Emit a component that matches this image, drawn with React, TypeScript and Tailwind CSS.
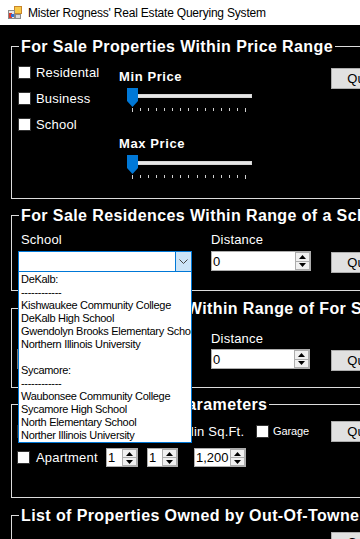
import React from 'react';

const LABEL = 'text-[13px] leading-[15px] text-white tracking-[0.2px] whitespace-nowrap';

function AppIcon() {
    return (
        <svg width="14" height="14" viewBox="0 0 14 14" className="block">
            <rect x="6.5" y="0.5" width="7" height="7" fill="#f7c948" stroke="#c9862a" />
            <rect x="0.5" y="4.5" width="6" height="8" fill="#e7e7e7" stroke="#8a8a8a" />
            <rect x="1" y="7" width="3" height="5" fill="#d83b2e" />
            <rect x="3" y="8" width="3" height="3" fill="#2f6fd6" />
            <rect x="7.5" y="8.5" width="5" height="4" fill="#d9d9d9" stroke="#8a8a8a" />
        </svg>
    );
}

function Check() {
    return <span className="block w-[13px] h-[13px] shrink-0 bg-white border border-[#333333]" />;
}

function Slider() {
    const ticks = Array.from({ length: 15 }, (_, i) => 6.5 + Math.round(i * 8.07));
    return (
        <svg width="130" height="26" className="block ml-[7px]">
            <rect x="10.5" y="6.5" width="115" height="3" fill="#e7e7e7" stroke="#d6d6d6" />
            {ticks.map((x, i) => (
                <line key={i} x1={x} x2={x} y1="20" y2={i === 0 || i === 14 ? 24 : 23} stroke="#d0d0d0" />
            ))}
            <path d="M1 0H12V13L6.5 19L1 13Z" fill="#0078d7" />
        </svg>
    );
}

function Arrow({ up }: { up?: boolean }) {
    return (
        <svg width="7" height="4" viewBox="0 0 7 4" className="block">
            <path d={up ? 'M0 4L3.5 0L7 4Z' : 'M0 0L3.5 4L7 0Z'} fill="#000" />
        </svg>
    );
}

function Spin({ value, className }: { value: string; className: string }) {
    return (
        <div className={`flex bg-white border border-[#adadad] ${className}`}>
            <span className="flex-1 self-center pl-[1px] text-[13px] leading-[15px] text-black">{value}</span>
            <div className="w-[15px] flex flex-col">
                <span className="flex-1 flex items-center justify-center bg-[#f0f0f0] border border-[#adadad]">
                    <Arrow up />
                </span>
                <span className="flex-1 flex items-center justify-center bg-[#f0f0f0] border border-t-0 border-[#adadad]">
                    <Arrow />
                </span>
            </div>
        </div>
    );
}

function QueryButton({ className = '' }: { className?: string }) {
    return (
        <button className={`w-[68px] h-[21px] shrink-0 bg-[#e1e1e1] border border-[#adadad] text-[13px] text-black flex items-center justify-center ${className}`}>
            Query
        </button>
    );
}

const schools = [
    'DeKalb:',
    '------------',
    'Kishwaukee Community College',
    'DeKalb High School',
    'Gwendolyn Brooks Elementary School',
    'Northern Illinois University',
    '',
    'Sycamore:',
    '------------',
    'Waubonsee Community College',
    'Sycamore High School',
    'North Elementary School',
    'Norther Illinois University',
];

function SchoolCombo() {
    return (
        <div className="relative w-[174px] h-[21px] flex bg-white border border-[#0078d7]">
            <div className="flex-1" />
            <div className="w-[16px] flex items-center justify-center bg-[#cce4f7] border-l border-[#0078d7]">
                <svg width="9" height="5" viewBox="0 0 9 5" className="block">
                    <polyline points="0.5,0.5 4.5,4.5 8.5,0.5" fill="none" stroke="#444" />
                </svg>
            </div>

            {/* open dropdown list */}
            <div className="absolute left-[-1px] top-full z-10 w-[174px] h-[172px] bg-white border border-[#0078d7] pt-[1px] pl-[2px] overflow-hidden">
                {schools.map((s, i) => (
                    <div key={i} className="h-[13px] text-[11px] leading-[13px] tracking-[-0.3px] text-black whitespace-nowrap">
                        {s}
                    </div>
                ))}
            </div>
        </div>
    );
}

function Group({ title, className, children }: { title: string; className: string; children: React.ReactNode }) {
    return (
        <fieldset className={`w-[600px] border border-[#dcdcdc] ${className}`}>
            <legend className="ml-[7px] px-[2px] h-[20px] text-[16px] leading-[22px] font-bold tracking-[0.4px] text-white whitespace-nowrap">
                {title}
            </legend>
            {children}
        </fieldset>
    );
}

export default function App() {
    return (
        <div className="w-[360px] h-[539px] overflow-hidden bg-black font-['Liberation_Sans',Arial,sans-serif]">
            {/* Title bar */}
            <div className="h-[25px] bg-white flex items-center pl-[8px] gap-[6px]">
                <AppIcon />
                <span className="text-[12px] tracking-[-0.2px] text-black">Mister Rogness' Real Estate Querying System</span>
            </div>

            <div className="pl-[11px]">
                {/* Price range */}
                <Group title="For Sale Properties Within Price Range" className="mt-[11px]">
                    <div className="h-[142px] flex">
                        <div className="w-[107px] pl-[6px] pt-[10px] flex flex-col gap-[13px]">
                            {['Residental', 'Business', 'School'].map(l => (
                                <div key={l} className="h-[13px] flex items-center gap-[5px]">
                                    <Check />
                                    <span className={LABEL}>{l}</span>
                                </div>
                            ))}
                        </div>
                        <div className="w-[212px] flex flex-col">
                            <span className="mt-[13px] text-[13px] leading-[15px] font-bold tracking-[0.6px] text-white">Min Price</span>
                            <div className="mt-[4px]"><Slider /></div>
                            <span className="mt-[22px] text-[13px] leading-[15px] font-bold tracking-[0.6px] text-white">Max Price</span>
                            <div className="mt-[4px]"><Slider /></div>
                        </div>
                        <QueryButton className="mt-[12px]" />
                    </div>
                </Group>

                {/* Near a school */}
                <Group title="For Sale Residences Within Range of a School" className="mt-[6px]">
                    <div className="h-[65px] flex">
                        <div className="w-[180px] pl-[6px] flex flex-col">
                            <span className={`mt-[7px] ml-[3px] ${LABEL}`}>School</span>
                            <div className="mt-[4px]"><SchoolCombo /></div>
                        </div>
                        <div className="ml-[19px] w-[100px] flex flex-col">
                            <span className={`mt-[7px] ${LABEL}`}>Distance</span>
                            <Spin value="0" className="mt-[4px] w-[100px] h-[20px]" />
                        </div>
                        <QueryButton className="ml-[20px] mt-[27px]" />
                    </div>
                </Group>

                {/* Near a business */}
                <Group title="For Sale Residential Within Range of For Sale Business" className="mt-[7px]">
                    <div className="h-[69px] flex">
                        <div className="w-[180px] pl-[5px] flex flex-col">
                            <span className={`mt-[13px] ml-[4px] ${LABEL}`}>Business</span>
                            <div className="mt-[3px] w-[175px] h-[20px] bg-white border border-[#7a7a7a]" />
                        </div>
                        <div className="ml-[19px] w-[100px] flex flex-col">
                            <span className={`mt-[13px] ${LABEL}`}>Distance</span>
                            <Spin value="0" className="mt-[3px] w-[99px] h-[20px]" />
                        </div>
                        <QueryButton className="ml-[20px] mt-[32px]" />
                    </div>
                </Group>

                {/* Parameters */}
                <Group title="Residential Search Parameters" className="mt-[6px]">
                    <div className="h-[83px] flex flex-col">
                        <div className="mt-[7px] h-[21px] flex items-center">
                            <div className="w-[94px] pl-[5px] flex items-center gap-[6px]">
                                <Check />
                                <span className={LABEL}>House</span>
                            </div>
                            <span className={`w-[41px] ${LABEL}`}>Beds</span>
                            <span className={`w-[36px] ${LABEL}`}>Baths</span>
                            <span className={`w-[73px] ${LABEL}`}>Min Sq.Ft.</span>
                            <div className="w-[75px] flex items-center gap-[4px]">
                                <Check />
                                <span className="text-[11px] tracking-[-0.1px] text-white">Garage</span>
                            </div>
                            <QueryButton />
                        </div>
                        <div className="mt-[6px] h-[19px] flex items-center">
                            <div className="w-[94px] pl-[5px] flex items-center gap-[6px]">
                                <Check />
                                <span className={LABEL}>Apartment</span>
                            </div>
                            <Spin value="1" className="w-[32px] h-[19px]" />
                            <Spin value="1" className="ml-[9px] w-[31px] h-[19px]" />
                            <Spin value="1,200" className="ml-[16px] w-[52px] h-[19px]" />
                        </div>
                    </div>
                </Group>

                {/* Out of towners */}
                <Group title="List of Properties Owned by Out-Of-Towners" className="mt-[7px]">
                    <div className="h-[40px] flex pl-[319px] pt-[7px]">
                        <QueryButton />
                    </div>
                </Group>
            </div>
        </div>
    );
}
